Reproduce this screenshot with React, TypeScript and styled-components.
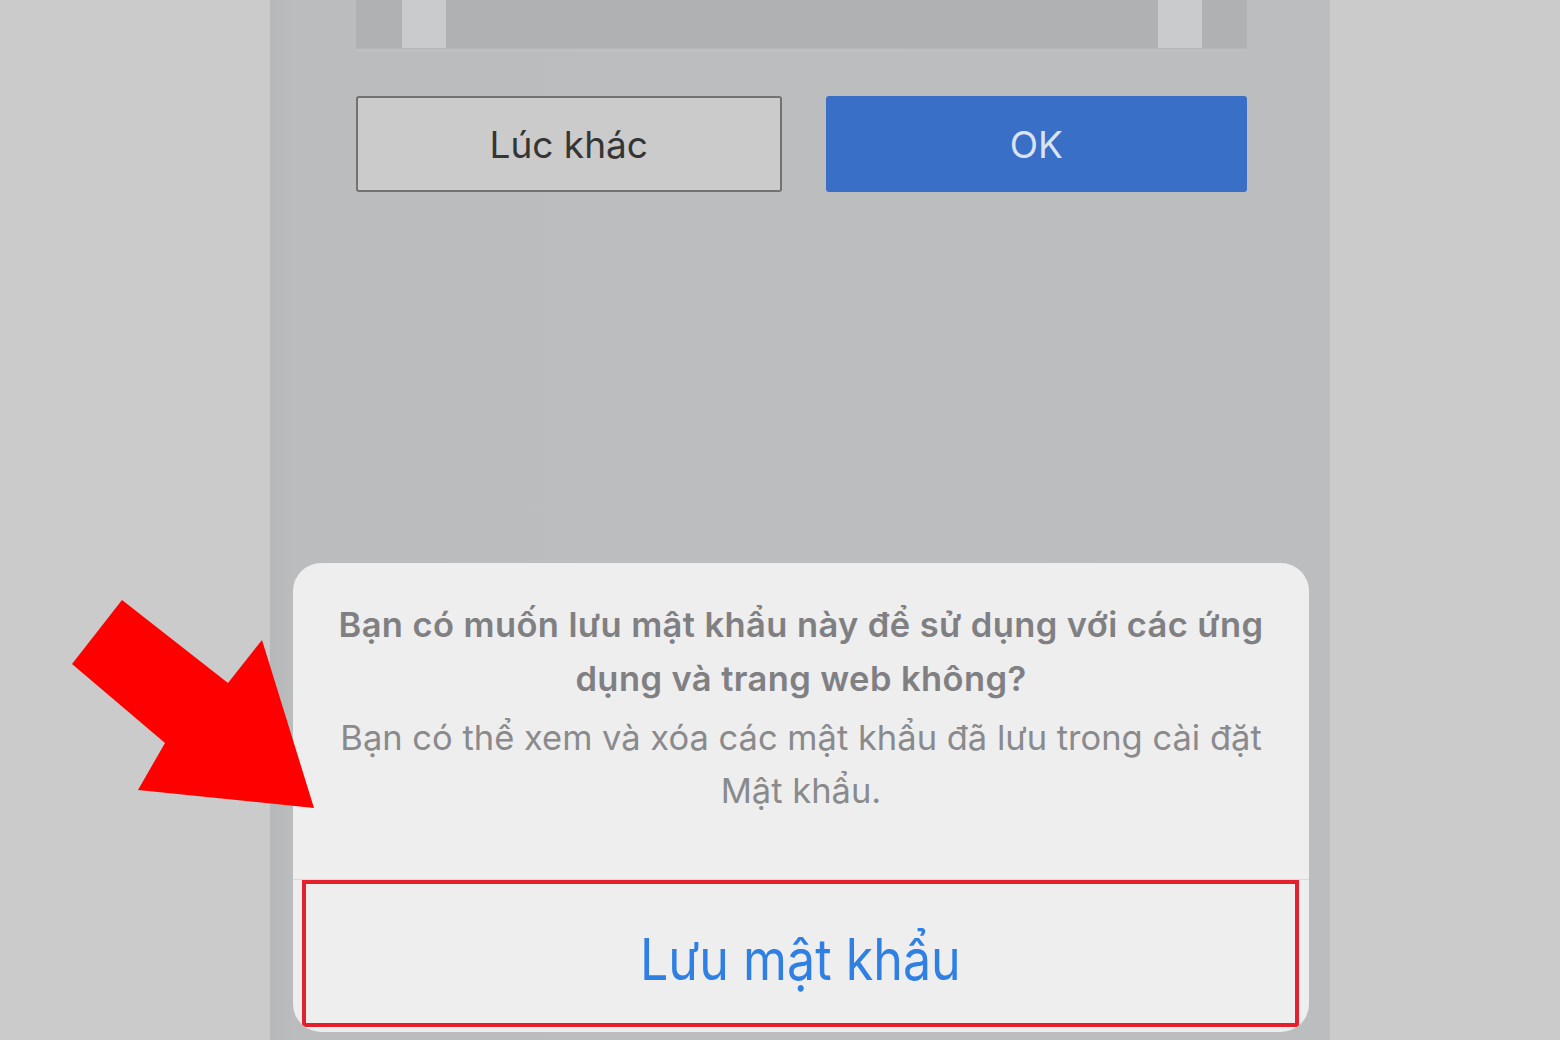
import React from "react";
import styled, { createGlobalStyle } from "styled-components";

const Global = createGlobalStyle`
  html, body { margin: 0; padding: 0; }
  body { background: #cbcbcb; font-family: Inter, "Noto Sans", sans-serif; overflow: hidden; }
`;

const Page = styled.div`
  position: relative;
  width: 1560px;
  height: 1040px;
  display: flex;
  background: #cbcbcb;
  overflow: hidden;
`;

const Gutter = styled.div<{ $w: number }>`
  width: ${(p) => p.$w}px;
  flex: none;
`;

const Phone = styled.div`
  width: 1060px;
  height: 1040px;
  flex: none;
  background: linear-gradient(90deg, #b6b7b9 0px, #bbbcbe 24px, #bcbdbf 100%);
  display: flex;
  flex-direction: column;
`;

const TopPanel = styled.div`
  margin: 0 83px 0 86px;
  height: 48px;
  background: #b0b1b3;
  border-bottom: 2px solid #b8b9bb;
  box-shadow: 0 1px 0 #c4c5c7;
  display: flex;
  justify-content: space-between;
  padding: 0 45px 0 46px;
`;

const Slot = styled.div`
  width: 44px;
  height: 48px;
  background: #cacbcc;
`;

const ButtonRow = styled.div`
  margin: 46px 83px 0 86px;
  display: flex;
  gap: 44px;
`;

const DialogButton = styled.div<{ $primary?: boolean }>`
  flex: 1;
  height: 96px;
  box-sizing: border-box;
  display: flex;
  align-items: center;
  justify-content: center;
  border-radius: 3px;
  font-size: 37px;
  font-family: Inter, "Noto Sans", sans-serif;
  background: ${(p) => (p.$primary ? "#3a6fc8" : "#cbcbcb")};
  color: ${(p) => (p.$primary ? "#dbe3f1" : "#353535")};
  border: ${(p) => (p.$primary ? "none" : "2px solid #727272")};
`;

const Sheet = styled.div`
  margin: auto 21px 8px 23px;
  background: #eeeeef;
  border-radius: 28px;
  display: flex;
  flex-direction: column;
  overflow: hidden;
`;

const Message = styled.div`
  padding: 35px 20px 62px;
  text-align: center;
  border-bottom: 1px solid #d9d9db;
`;

const Title = styled.p`
  margin: 0;
  font-size: 34.5px;
  line-height: 54px;
  font-weight: 600;
  letter-spacing: 0.4px;
  color: #808083;
`;

const Body = styled.p`
  margin: 5px 0 0;
  font-size: 34.5px;
  line-height: 53px;
  font-weight: 400;
  color: #8a8a8c;
`;

const ActionRow = styled.div`
  padding: 0 10px 5px 9px;
`;

const Highlight = styled.div`
  height: 147px;
  box-sizing: border-box;
  border: 4px solid #e3202b;
  display: flex;
  align-items: center;
  justify-content: center;
`;

const ActionLabel = styled.span`
  font-size: 57px;
  color: #2f80e2;
  display: inline-block;
  transform: scaleX(0.88);
  margin-top: 12px;
`;

const Arrow = styled.svg`
  position: absolute;
  left: 0;
  top: 0;
  pointer-events: none;
`;

export default function App() {
  return (
    <>
      <Global />
      <Page>
        <Gutter $w={270} />
        <Phone>
          <TopPanel>
            <Slot />
            <Slot />
          </TopPanel>
          <ButtonRow>
            <DialogButton>Lúc khác</DialogButton>
            <DialogButton $primary>OK</DialogButton>
          </ButtonRow>
          <Sheet>
            <Message>
              <Title>
                Bạn có muốn lưu mật khẩu này để sử dụng với các ứng
                <br />
                dụng và trang web không?
              </Title>
              <Body>
                Bạn có thể xem và xóa các mật khẩu đã lưu trong cài đặt
                <br />
                Mật khẩu.
              </Body>
            </Message>
            <ActionRow>
              <Highlight>
                <ActionLabel>Lưu mật khẩu</ActionLabel>
              </Highlight>
            </ActionRow>
          </Sheet>
        </Phone>
        <Gutter $w={230} />
        <Arrow width="1560" height="1040" viewBox="0 0 1560 1040">
          <polygon
            points="122,600 72,664 165,743 138,790 314,808 262,640 228,683"
            fill="#fe0000"
          />
        </Arrow>
      </Page>
    </>
  );
}
